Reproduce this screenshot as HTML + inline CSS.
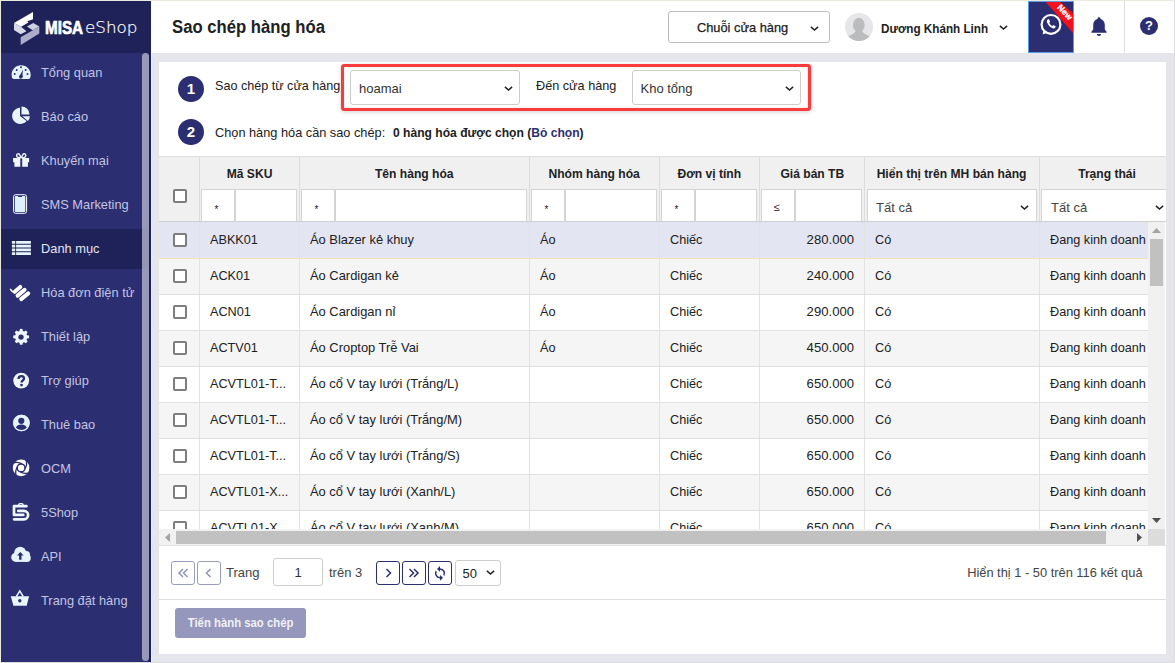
<!DOCTYPE html>
<html lang="vi">
<head>
<meta charset="utf-8">
<title>Sao chép hàng hóa</title>
<style>
*{box-sizing:border-box;margin:0;padding:0}
html,body{width:1175px;height:663px;overflow:hidden}
body{font-family:"Liberation Sans",sans-serif;font-size:13px;color:#212121;background:#e5e6eb;position:relative}
.abs{position:absolute}
.t{display:inline-block;transform-origin:0 50%;transform:scaleX(.975);white-space:nowrap}
.tb{display:inline-block;transform-origin:0 50%;transform:scaleX(.93);white-space:nowrap;font-weight:bold}
.tc{transform-origin:50% 50%}
.tr{transform-origin:100% 50%}
#frame{position:absolute;left:0;top:0;width:1175px;height:663px;border-left:1px solid #e9e9e2;border-top:1px solid #e9e9e2;border-right:1px solid #dcdcdc;border-bottom:1px solid #dcdcdc;pointer-events:none;z-index:50}
/* sidebar */
#side{position:absolute;left:1px;top:1px;width:150px;height:661px;background:#2b2e70}
#logo{position:absolute;left:0;top:0;width:150px;height:52px;background:#1f2259}
#misa{position:absolute;left:43.5px;top:14.5px;font-size:17.5px;font-weight:bold;color:#fff;line-height:24px;transform-origin:0 50%;transform:scaleX(.87);-webkit-text-stroke:.7px #fff}
#eshop{position:absolute;left:83.7px;top:14.5px;font-family:"DejaVu Sans Light","DejaVu Sans",sans-serif;font-weight:200;font-size:16.5px;color:#fff;line-height:24px;transform-origin:0 50%;transform:scaleX(1.015);-webkit-text-stroke:.2px #fff}
.mi{position:absolute;left:0;width:150px;height:40px;color:#c3c5e3;font-size:13.5px;line-height:40px;white-space:nowrap}
.mi span{position:absolute;left:40px;top:0;transform:scaleX(.95)}
.mi svg{position:absolute;left:10px;top:9px;width:20px;height:20px}
.mi.act{background:#1f2259;color:#e4e5f5}
#sthumb{position:absolute;left:141px;top:52px;width:7px;height:608px;background:rgba(200,199,215,.7);border-radius:4px}
#sedge{position:absolute;left:148px;top:52px;width:2px;height:609px;background:#1a1e68}
#wline{position:absolute;left:151px;top:53px;width:1px;height:609px;background:#f4f4f6}
/* header */
#head{position:absolute;left:151px;top:1px;width:1023px;height:52px;background:#fff}
#title{position:absolute;left:21px;top:14px;font-size:18px;color:#212121;line-height:24px;transform:scaleX(.927)}
#chain{position:absolute;left:517px;top:10px;width:162px;height:32px;border:1px solid #bdbdbd;border-radius:3px;background:#fff}
#chain span{position:absolute;left:28px;top:0;line-height:31px;font-size:13px;-webkit-text-stroke:.25px #212121;transform:scaleX(.985)}
#avatar{position:absolute;left:694px;top:12px;width:28px;height:28px;border-radius:50%;background:#e6e6e8;overflow:hidden}
#uname{position:absolute;left:730px;top:1px;line-height:54px;font-size:13px;color:#212121;transform:scaleX(.9)}
#callbox{position:absolute;left:877px;top:0;width:46px;height:52px;background:#2b2e70;border:1px solid #5b9be6;overflow:hidden}
#vsep{position:absolute;left:973px;top:0;width:1px;height:52px;background:#e0e0e0}
#qm{position:absolute;left:989px;top:16px;width:18px;height:18px;border-radius:50%;background:#2b2e70;color:#fff;font-weight:bold;font-size:13px;line-height:18px;text-align:center}
/* panel */
#panel{position:absolute;left:159px;top:62px;width:1007px;height:592px;background:#fff;overflow:hidden}
.circ{position:absolute;left:19px;width:26px;height:26px;border-radius:50%;background:#2b2e70;color:#fff;font-weight:bold;font-size:15px;line-height:26px;text-align:center}
.lbl{position:absolute;white-space:nowrap;font-size:13px;line-height:18px;color:#212121}
#redbox{position:absolute;left:182.3px;top:2px;width:469.7px;height:47px;border:3px solid #fb3c3c;border-radius:3px;box-shadow:0 1px 4px rgba(0,0,0,.18),inset 0 0 3px rgba(0,0,0,.12)}
.sel{position:absolute;height:35px;border:1px solid #ccc;border-radius:3px;background:#fff;font-size:13px;line-height:35px;white-space:nowrap}
.sel span{position:absolute;left:8px;top:-.2px;transform:none;color:#333}
.chev{position:absolute;width:9px;height:6px}
/* grid */
#grid{position:absolute;left:0;top:94px;width:1007px;height:390px;overflow:hidden}
#ghead{position:absolute;left:0;top:0;width:1007px;height:66px;background:#f0f0f0;border-top:1px solid #dedede;border-bottom:1px solid #cfcfcf;overflow:hidden}
.vl{position:absolute;top:0;width:1px;height:100%;background:#dcdcdc}
.th{position:absolute;top:0;height:33px;line-height:33px;text-align:center;font-size:13px;white-space:nowrap;color:#212121}
.fb{position:absolute;top:32px;height:34px;background:#fff;border:1px solid #d4d4d4;border-bottom:none;font-size:11px;color:#222}
.fb i{position:absolute;left:0;top:0;width:100%;font-style:normal;line-height:34px;text-align:left}
.cb{position:absolute;width:14px;height:14px;border:2px solid #7d7d7d;border-radius:2px;background:#fff}
#gbody{position:absolute;left:0;top:66px;width:989px;height:307px;overflow:hidden;background:#e3e5f2}
.row{position:absolute;left:0;width:1200px;height:36px;border-bottom:1px solid #e0e0e0;background:#fff;line-height:34px;font-size:13px;white-space:nowrap;color:#212121}
.row.alt{background:#f5f5f5}
.row.sel1{background:#e3e5f2;border-bottom-color:#f3e2b6}
.row span{position:absolute;top:0}
.row .cb{top:10px;left:14px}
#vsb{position:absolute;left:989px;top:66px;width:17px;height:307px;background:#f1f1f1}
#vthumb{position:absolute;left:2px;top:17px;width:13px;height:47px;background:#c1c1c1}
#hsb{position:absolute;left:0;top:373px;width:989px;height:17px;background:#f1f1f1}
#hthumb{position:absolute;left:17px;top:2px;width:930px;height:13px;background:#c1c1c1}
#corner{position:absolute;left:989px;top:373px;width:17px;height:17px;background:#dcdcdc}
#pager{position:absolute;left:0;top:483px;width:1007px;height:55px;border-top:1px solid #e0e0e0;border-bottom:1px solid #e0e0e0}
.pb{position:absolute;top:14.5px;width:24px;height:24px;border:1px solid #2b2e70;border-radius:3px;background:#fff}
.pb.dis{border-color:#9a9cc0}
.pb svg{position:absolute;left:50%;top:50%;transform:translate(-50%,-50%)}
#pgin{position:absolute;left:114px;top:12px;width:50px;height:28px;border:1px solid #ccc;border-radius:3px;text-align:center;line-height:28px;font-size:13px;color:#333}
#pgsz{position:absolute;left:295.5px;top:14px;width:46px;height:26px;border:1px solid #ccc;border-radius:3px;font-size:13px;line-height:25px}
#pgsz span{position:absolute;left:7px}
#btn{position:absolute;left:16px;top:546px;width:131px;height:30px;background:#9697bd;border-radius:3px;color:rgba(255,255,255,.88);font-size:13px;line-height:30px;text-align:center;white-space:nowrap}
#btn span{transform:scaleX(.872)}
</style>
</head>
<body>
<div id="side">
<div id="logo">
<svg class="abs" style="left:12px;top:9.7px" width="30" height="36" viewBox="0 0 30 36"><path d="M1 12.1L20 .9v7.4l-5.7 1.9 1.1 1.4-7.3 4.1z" fill="#ffffff"/><path d="M1 12.1l7.1 3.6 5.3 4.5-5.7 3.1L1 19z" fill="#d8d9e7"/><path d="M14 15.4l6.3-3.3 6 3.5-6.6 3.6z" fill="#cfd1e1"/><path d="M7.7 26.3l18.6-10.7v6.9L7.7 33.9z" fill="#abadca"/></svg>
<span id="misa">MISA</span><span id="eshop">eShop</span>
</div>
<div class="mi" style="top:52px"><svg viewBox="0 0 20 20" overflow="visible"><path d="M10.15 3.2c-5.3 0-9.55 4.25-9.55 9.5 0 1.2.2 2.3.6 3.3.3.7.8 1.1 1.6 1.1h14.7c.8 0 1.3-.4 1.6-1.1.4-1 .6-2.1.6-3.3 0-5.25-4.25-9.5-9.55-9.5z" fill="#e6f3fc"/><circle cx="10" cy="5.3" r="1" fill="#2b2e70"/><circle cx="5.7" cy="8.1" r="1" fill="#2b2e70"/><circle cx="14.6" cy="8.1" r="1" fill="#2b2e70"/><circle cx="3.7" cy="12.1" r="1" fill="#2b2e70"/><circle cx="16.5" cy="12.1" r="1" fill="#2b2e70"/><path d="M11.9 7.6l-2.9 5.8a1.7 1.7 0 1 0 2.4.9z" fill="#2b2e70"/><circle cx="10" cy="14.3" r="1.7" fill="#2b2e70"/></svg><span class="t">Tổng quan</span></div>
<div class="mi" style="top:96px"><svg viewBox="0 0 20 20" overflow="visible"><path d="M9 1.8A8.1 8.1 0 1 0 15.6 14.9L9 9.9z" fill="#e9f3fc"/><path d="M10.5 8.4V.5a8 8 0 0 1 8 7.9z" fill="#e9f3fc"/><path d="M11.4 10.2h7.5a8 8 0 0 1-2 4.8z" fill="#e9f3fc"/></svg><span class="t">Báo cáo</span></div>
<div class="mi" style="top:140px"><svg viewBox="0 0 20 20" overflow="visible"><path d="M2.1 8h7.2v4.3H2.1zM11.2 8h6.9v4.3h-6.9zM3.4 12.3h5.9v4.5H3.4zM11.2 12.3h5.7v4.5h-5.7z" fill="#f2f6fd"/><path d="M9.7 7.6C8 7.9 5.7 7.4 5.6 5.6 5.5 4 7.4 3.1 8.5 4.5c.7.8 1 2 1.2 3.1zM10.7 7.6c1.7.3 4-.2 4.1-2 .1-1.6-1.8-2.5-2.9-1.1-.7.8-1 2-1.2 3.1z" fill="none" stroke="#f2f6fd" stroke-width="1.4"/></svg><span class="t">Khuyến mại</span></div>
<div class="mi" style="top:184px"><svg viewBox="0 0 20 20" overflow="visible"><rect x="2.6" y=".7" width="13" height="18.6" rx="2" fill="none" stroke="#ffffff" stroke-width="1"/><rect x="3.9" y="2" width="10.4" height="16" rx="1" fill="#dff0fb"/><rect x="7" y="2" width="4.2" height="1" rx=".5" fill="#2b2e70"/></svg><span class="t">SMS Marketing</span></div>
<div class="mi act" style="top:228px"><svg viewBox="0 0 20 20" overflow="visible"><path d="M.9 3h3.3v2.75H.9zM5.1 3h14.8v2.75H5.1zM.9 6.75h3.3V9.5H.9zM5.1 6.75h14.8V9.5H5.1zM.9 10.5h3.3v2.75H.9zM5.1 10.5h14.8v2.75H5.1zM.9 14.25h3.3V17H.9zM5.1 14.25h14.8V17H5.1z" fill="#e8f4fc"/></svg><span class="t">Danh mục</span></div>
<div class="mi" style="top:272px"><svg viewBox="0 0 20 20" overflow="visible"><g fill="none" stroke="#ffffff" stroke-linecap="round"><path d="M3.7 9.7L9.3 4.9" stroke-width="3.9"/><path d="M6.6 13.6l7-5.8" stroke-width="4"/><path d="M10.2 17.1l7-5.7" stroke-width="4"/><path d="M-.5 7.3Q.8 9.6 3.6 10.9" stroke-width="1.5"/></g></svg><span class="t">Hóa đơn điện tử</span></div>
<div class="mi" style="top:316px"><svg viewBox="0 0 20 20" overflow="visible"><path d="M10 0.8l1.7.2.5 2.3 1.5.7 2-1.3 2.1 2.1-1.3 2 .6 1.5 2.4.5v3l-2.4.5-.6 1.5 1.3 2-2.1 2.1-2-1.3-1.5.6-.5 2.4h-3l-.5-2.4-1.5-.6-2 1.3-2.1-2.1 1.3-2-.6-1.5-2.4-.5v-3l2.4-.5.6-1.5-1.3-2 2.1-2.1 2 1.3 1.5-.7.5-2.3z" fill="#f0f5fd" transform="translate(1.5 2.1) scale(.85)"/><circle cx="10" cy="11.1" r="2.7" fill="#2b2e70"/></svg><span class="t">Thiết lập</span></div>
<div class="mi" style="top:360px"><svg viewBox="0 0 20 20" overflow="visible"><circle cx="10.2" cy="10.6" r="7.9" fill="#f0f6fd"/><path d="M7.5 8.9c0-1.7 1.2-2.7 2.8-2.7s2.7.9 2.7 2.3c0 1.9-2.5 2.1-2.5 4" fill="none" stroke="#2b2e70" stroke-width="2.3"/><circle cx="10.5" cy="15.1" r="1.4" fill="#2b2e70"/></svg><span class="t">Trợ giúp</span></div>
<div class="mi" style="top:404px"><svg viewBox="0 0 20 20" overflow="visible"><circle cx="10.4" cy="9" r="8.2" fill="#e6f3fc"/><circle cx="10.3" cy="6.8" r="3.1" fill="#2b2e70"/><path d="M4.5 14.3c.6-2.7 2.9-3.9 5.8-3.9s5.2 1.2 5.8 3.9c-1.4 1.7-3.5 2.5-5.8 2.5s-4.4-.8-5.8-2.5z" fill="#2b2e70"/><circle cx="10.4" cy="9" r="7.7" fill="none" stroke="#e6f3fc" stroke-width="1.3"/></svg><span class="t">Thuê bao</span></div>
<div class="mi" style="top:448px"><svg viewBox="0 0 20 20" overflow="visible"><circle cx="10.1" cy="9.9" r="8.3" fill="#ffffff"/><g transform="translate(10.1 9.9)" fill="none" stroke="#2b2e70" stroke-width="1.3" stroke-linecap="round"><circle r="3.9" stroke-width="1.5"/><path d="M.2 -4.3Q-3.3 -6.1 -6.6 -5.3"/><g transform="rotate(90)"><path d="M.2 -4.3Q-3.3 -6.1 -6.6 -5.3"/></g><g transform="rotate(180)"><path d="M.2 -4.3Q-3.3 -6.1 -6.6 -5.3"/></g><g transform="rotate(270)"><path d="M.2 -4.3Q-3.3 -6.1 -6.6 -5.3"/></g></g></svg><span class="t">OCM</span></div>
<div class="mi" style="top:492px"><svg viewBox="0 0 20 20" overflow="visible"><g fill="none" stroke="#eef8fe" stroke-linecap="round" stroke-linejoin="round"><path d="M7.7 3.2V2.9a1.3 1.3 0 0 1 1.3-1.3h1.8a1.3 1.3 0 0 1 1.3 1.3v.3" stroke-width="1.4"/><path d="M15.4 4.2H3V12.9h9.3" stroke-width="2.7"/><path d="M7.3 8.9h5.6a4.2 4.2 0 0 1 0 8.4H3.1" stroke-width="2.7"/></g></svg><span class="t">5Shop</span></div>
<div class="mi" style="top:536px"><svg viewBox="0 0 20 20" overflow="visible"><g fill="#e6f3fc"><circle cx="4.8" cy="11.3" r="4.6"/><circle cx="9.2" cy="6.8" r="6"/><circle cx="15.2" cy="8.7" r="3.8"/><circle cx="15.9" cy="12" r="3.9"/><rect x="4.8" y="9" width="11.1" height="6.9"/></g><path d="M9.3 5.9l3.3 3.7h-2.1v4.1H8.1V9.6H6z" fill="#2b2e70"/></svg><span class="t">API</span></div>
<div class="mi" style="top:580px"><svg viewBox="0 0 20 20" overflow="visible"><path d="M-.2 6.3h18.3l-2.4 9.5H2.4z" fill="#e9f4fd"/><path d="M5.4 6.5L8.8.9l3.4 5.6" fill="none" stroke="#e9f4fd" stroke-width="1.5"/><circle cx="8.8" cy="10.7" r="1.7" fill="#2b2e70"/></svg><span class="t">Trang đặt hàng</span></div>
<div id="sedge"></div><div id="sthumb"></div></div><div id="wline"></div>
<div id="head">
<div id="title" class="tb">Sao chép hàng hóa</div>
<div id="chain"><span class="t">Chuỗi cửa hàng</span><svg class="chev" style="left:140.9px;top:14.3px" viewBox="0 0 9 6"><path d="M.9 .9L4.5 4l3.6-3.1" fill="none" stroke="#222" stroke-width="1.5"/></svg></div>
<div id="avatar"><svg width="28" height="28" viewBox="0 0 28 28"><ellipse cx="13.85" cy="11.9" rx="5.9" ry="7.1" fill="#bbbcbe"/><path d="M3 23.3C6 21.6 10.2 20.8 10.6 17.5h6.6c.4 3.3 4.6 4.1 7.6 5.8V29H3z" fill="#bbbcbe"/></svg></div>
<div id="uname" class="tb">Dương Khánh Linh</div><svg class="chev" style="left:847.9px;top:24.3px" viewBox="0 0 9 6"><path d="M.9 .9L4.5 4l3.6-3.1" fill="none" stroke="#222" stroke-width="1.5"/></svg>
<div id="callbox"><svg class="abs" style="left:0;top:0" width="44" height="50" viewBox="0 0 44 50"><path d="M16.7 0h14.5L44 11.2V31z" fill="#f5101c"/><circle cx="22" cy="22.4" r="9.4" fill="#2b2e70" stroke="#fff" stroke-width="2.2"/><path d="M14.3 27.8l-.6 4.7 5.2-2z" fill="#fff"/><path d="M18.7 17.6c-.9.6-1.1 1.6-.7 2.7 1.1 2.9 3 4.9 5.7 6 1.1.4 2.1.1 2.7-.9l.4-.8-2.4-1.6-1.1 1c-1.4-.7-2.4-1.8-3.1-3.3l1-1.1-1.5-2.5z" fill="#fff"/><text x="0" y="0" transform="translate(27.8 5.8) rotate(47)" font-family="Liberation Sans, sans-serif" font-size="8.5" font-weight="bold" fill="#fff" stroke="#fff" stroke-width=".3">New</text></svg></div>
<svg class="abs" style="left:939px;top:15px" width="18" height="22" viewBox="0 0 18 22"><path d="M9 1.2c.9 0 1.5.6 1.5 1.4v.5c2.7.7 4.3 3 4.3 5.9v4.5l1.8 2.3v1H1.4v-1l1.8-2.3V9c0-2.9 1.6-5.2 4.3-5.9v-.5c0-.8.6-1.4 1.5-1.4z" fill="#2b2e70"/><path d="M6.9 18h4.2a2.1 2.1 0 0 1-4.2 0z" fill="#2b2e70"/></svg>
<div id="vsep"></div>
<div id="qm">?</div>
</div>
<div id="panel">
<div class="circ" style="top:14px">1</div>
<div class="lbl t" style="left:56px;top:15px;transform:scaleX(.968)">Sao chép từ cửa hàng</div>
<div id="redbox"></div>
<div class="sel" style="left:191px;top:8px;width:170px"><span class="t">hoamai</span><svg class="chev" style="left:152.5px;top:15.3px" viewBox="0 0 9 6"><path d="M.9 .9L4.5 4l3.6-3.1" fill="none" stroke="#222" stroke-width="1.5"/></svg></div>
<div class="lbl t" style="left:377px;top:15px">Đến cửa hàng</div>
<div class="sel" style="left:472.5px;top:8px;width:169px"><span class="t">Kho tổng</span><svg class="chev" style="left:152px;top:15.3px" viewBox="0 0 9 6"><path d="M.9 .9L4.5 4l3.6-3.1" fill="none" stroke="#222" stroke-width="1.5"/></svg></div>
<div class="circ" style="top:57px">2</div>
<div class="lbl t" style="left:56px;top:61.7px;transform:scaleX(.981)">Chọn hàng hóa cần sao chép:</div>
<div class="lbl tb" style="left:234px;top:61.7px"><span id="cnt">0 hàng hóa được chọn (</span><span style="color:#2b2e70">Bỏ chọn</span>)</div>
<div id="grid"><div id="ghead">
<div class="vl" style="left:40px"></div>
<div class="vl" style="left:140px"></div>
<div class="vl" style="left:370px"></div>
<div class="vl" style="left:500px"></div>
<div class="vl" style="left:600px"></div>
<div class="vl" style="left:705px"></div>
<div class="vl" style="left:880px"></div>
<div class="th" style="left:41px;width:99px"><span class="tb tc">Mã SKU</span></div>
<div class="fb" style="left:42px;width:34px"><i style="padding-left:12.5px;font-size:10px;top:3.3px">*</i></div>
<div class="fb" style="left:76px;width:62px"></div>
<div class="th" style="left:141px;width:229px"><span class="tb tc">Tên hàng hóa</span></div>
<div class="fb" style="left:142px;width:34px"><i style="padding-left:12.5px;font-size:10px;top:3.3px">*</i></div>
<div class="fb" style="left:176px;width:192px"></div>
<div class="th" style="left:371px;width:129px"><span class="tb tc">Nhóm hàng hóa</span></div>
<div class="fb" style="left:372px;width:34px"><i style="padding-left:12.5px;font-size:10px;top:3.3px">*</i></div>
<div class="fb" style="left:406px;width:92px"></div>
<div class="th" style="left:501px;width:99px"><span class="tb tc">Đơn vị tính</span></div>
<div class="fb" style="left:502px;width:34px"><i style="padding-left:12.5px;font-size:10px;top:3.3px">*</i></div>
<div class="fb" style="left:536px;width:62px"></div>
<div class="th" style="left:601px;width:104px"><span class="tb tc">Giá bán TB</span></div>
<div class="fb" style="left:602px;width:34px"><i style="padding-left:11.5px;">≤</i></div>
<div class="fb" style="left:636px;width:67px"></div>
<div class="th" style="left:706px;width:174px"><span class="tb tc">Hiển thị trên MH bán hàng</span></div>
<div class="fb fs" style="left:708px;width:170px"><i style="padding-left:8px;font-size:13px;color:#444;top:1px">Tất cả</i><svg class="chev" style="left:151.5px;top:14.5px" viewBox="0 0 9 6"><path d="M.9 .9L4.5 4l3.6-3.1" fill="none" stroke="#222" stroke-width="1.5"/></svg></div>
<div class="th" style="left:881px;width:135px"><span class="tb tc">Trạng thái</span></div>
<div class="fb fs" style="left:882px;width:140px"><i style="padding-left:9px;font-size:13px;color:#444;top:1px">Tất cả</i><svg class="chev" style="left:113px;top:14.5px" viewBox="0 0 9 6"><path d="M.9 .9L4.5 4l3.6-3.1" fill="none" stroke="#222" stroke-width="1.5"/></svg></div>
<div class="cb" style="left:14px;top:32px"></div>
</div>
<div id="gbody">
<div class="row sel1" style="top:1px"><div class="cb"></div><span class="t" style="left:51px">ABKK01</span><span class="t" style="left:151px;transform:scaleX(.992)">Áo Blazer kẻ khuy</span><span class="t" style="left:381px">Áo</span><span class="t" style="left:511px">Chiếc</span><span class="t tr" style="left:601px;width:94px;text-align:right;transform:scaleX(1.008)">280.000</span><span class="t" style="left:716px">Có</span><span class="t" style="left:891px">Đang kinh doanh</span></div>
<div class="row alt" style="top:37px"><div class="cb"></div><span class="t" style="left:51px">ACK01</span><span class="t" style="left:151px;transform:scaleX(.992)">Áo Cardigan kẻ</span><span class="t" style="left:381px">Áo</span><span class="t" style="left:511px">Chiếc</span><span class="t tr" style="left:601px;width:94px;text-align:right;transform:scaleX(1.008)">240.000</span><span class="t" style="left:716px">Có</span><span class="t" style="left:891px">Đang kinh doanh</span></div>
<div class="row" style="top:73px"><div class="cb"></div><span class="t" style="left:51px">ACN01</span><span class="t" style="left:151px;transform:scaleX(.992)">Áo Cardigan nỉ</span><span class="t" style="left:381px">Áo</span><span class="t" style="left:511px">Chiếc</span><span class="t tr" style="left:601px;width:94px;text-align:right;transform:scaleX(1.008)">290.000</span><span class="t" style="left:716px">Có</span><span class="t" style="left:891px">Đang kinh doanh</span></div>
<div class="row alt" style="top:109px"><div class="cb"></div><span class="t" style="left:51px">ACTV01</span><span class="t" style="left:151px;transform:scaleX(.992)">Áo Croptop Trễ Vai</span><span class="t" style="left:381px">Áo</span><span class="t" style="left:511px">Chiếc</span><span class="t tr" style="left:601px;width:94px;text-align:right;transform:scaleX(1.008)">450.000</span><span class="t" style="left:716px">Có</span><span class="t" style="left:891px">Đang kinh doanh</span></div>
<div class="row" style="top:145px"><div class="cb"></div><span class="t" style="left:51px">ACVTL01-T...</span><span class="t" style="left:151px;transform:scaleX(.992)">Áo cổ V tay lưới (Trắng/L)</span><span class="t" style="left:381px"></span><span class="t" style="left:511px">Chiếc</span><span class="t tr" style="left:601px;width:94px;text-align:right;transform:scaleX(1.008)">650.000</span><span class="t" style="left:716px">Có</span><span class="t" style="left:891px">Đang kinh doanh</span></div>
<div class="row alt" style="top:181px"><div class="cb"></div><span class="t" style="left:51px">ACVTL01-T...</span><span class="t" style="left:151px;transform:scaleX(.992)">Áo cổ V tay lưới (Trắng/M)</span><span class="t" style="left:381px"></span><span class="t" style="left:511px">Chiếc</span><span class="t tr" style="left:601px;width:94px;text-align:right;transform:scaleX(1.008)">650.000</span><span class="t" style="left:716px">Có</span><span class="t" style="left:891px">Đang kinh doanh</span></div>
<div class="row" style="top:217px"><div class="cb"></div><span class="t" style="left:51px">ACVTL01-T...</span><span class="t" style="left:151px;transform:scaleX(.992)">Áo cổ V tay lưới (Trắng/S)</span><span class="t" style="left:381px"></span><span class="t" style="left:511px">Chiếc</span><span class="t tr" style="left:601px;width:94px;text-align:right;transform:scaleX(1.008)">650.000</span><span class="t" style="left:716px">Có</span><span class="t" style="left:891px">Đang kinh doanh</span></div>
<div class="row alt" style="top:253px"><div class="cb"></div><span class="t" style="left:51px">ACVTL01-X...</span><span class="t" style="left:151px;transform:scaleX(.992)">Áo cổ V tay lưới (Xanh/L)</span><span class="t" style="left:381px"></span><span class="t" style="left:511px">Chiếc</span><span class="t tr" style="left:601px;width:94px;text-align:right;transform:scaleX(1.008)">650.000</span><span class="t" style="left:716px">Có</span><span class="t" style="left:891px">Đang kinh doanh</span></div>
<div class="row" style="top:289px"><div class="cb"></div><span class="t" style="left:51px">ACVTL01-X...</span><span class="t" style="left:151px;transform:scaleX(.992)">Áo cổ V tay lưới (Xanh/M)</span><span class="t" style="left:381px"></span><span class="t" style="left:511px">Chiếc</span><span class="t tr" style="left:601px;width:94px;text-align:right;transform:scaleX(1.008)">650.000</span><span class="t" style="left:716px">Có</span><span class="t" style="left:891px">Đang kinh doanh</span></div>
<div class="vl" style="left:40px;background:#e2e2e2"></div>
<div class="vl" style="left:140px;background:#e2e2e2"></div>
<div class="vl" style="left:370px;background:#e2e2e2"></div>
<div class="vl" style="left:500px;background:#e2e2e2"></div>
<div class="vl" style="left:600px;background:#e2e2e2"></div>
<div class="vl" style="left:705px;background:#e2e2e2"></div>
<div class="vl" style="left:880px;background:#e2e2e2"></div>
</div>
<div id="vsb"><svg class="abs" style="left:4px;top:6px" width="9" height="5" viewBox="0 0 9 5"><path d="M0 5l4.5-5 4.5 5z" fill="#a3a3a3"/></svg><div id="vthumb"></div><svg class="abs" style="left:4px;top:296px" width="9" height="5" viewBox="0 0 9 5"><path d="M0 0l4.5 5 4.5-5z" fill="#505050"/></svg></div>
<div id="hsb"><svg class="abs" style="left:6px;top:4px" width="5" height="9" viewBox="0 0 5 9"><path d="M5 0L0 4.5 5 9z" fill="#a3a3a3"/></svg><div id="hthumb"></div><svg class="abs" style="left:978px;top:4px" width="5" height="9" viewBox="0 0 5 9"><path d="M0 0l5 4.5L0 9z" fill="#505050"/></svg></div><div id="corner"></div>
</div>
<div id="pager">
<div class="pb dis" style="left:12px"><svg width="12" height="10" viewBox="0 0 12 10"><path d="M6 1L2 5l4 4M10.5 1l-4 4 4 4" fill="none" stroke="#8f91b8" stroke-width="1.5"/></svg></div>
<div class="pb dis" style="left:38px"><svg width="12" height="10" viewBox="0 0 12 10"><path d="M7.5 1l-4 4 4 4" fill="none" stroke="#8f91b8" stroke-width="1.5"/></svg></div>
<div class="lbl" style="left:67px;top:18px;color:#444">Trang</div>
<div id="pgin">1</div>
<div class="lbl" style="left:170px;top:18px;color:#444">trên 3</div>
<div class="pb" style="left:217px"><svg width="12" height="10" viewBox="0 0 12 10"><path d="M4.5 1l4 4-4 4" fill="none" stroke="#2b2e70" stroke-width="1.5"/></svg></div>
<div class="pb" style="left:243px"><svg width="12" height="10" viewBox="0 0 12 10"><path d="M1.5 1l4 4-4 4M6 1l4 4-4 4" fill="none" stroke="#2b2e70" stroke-width="1.5"/></svg></div>
<div class="pb" style="left:269px"><svg width="14" height="16" viewBox="0 0 14 16"><path d="M7 3.2V1L4 3.9 7 6.8V4.7a3.6 3.6 0 0 1 3.2 5.3l1.1 1.1A5.1 5.1 0 0 0 7 3.2zM7 12a3.6 3.6 0 0 1-3.2-5.3L2.7 5.6A5.1 5.1 0 0 0 7 13.5v2.2l3-2.9-3-2.9z" fill="#2b2e70"/></svg></div>
<div id="pgsz"><span>50</span><svg class="chev" style="left:30.5px;top:8.8px" viewBox="0 0 9 6"><path d="M.9 .9L4.5 4l3.6-3.1" fill="none" stroke="#222" stroke-width="1.5"/></svg></div>
<div class="lbl t tr" style="right:23px;top:18px;color:#444;transform:scaleX(.988)">Hiển thị 1 - 50 trên 116 kết quả</div>
</div>
<div id="btn"><span class="tb tc">Tiến hành sao chép</span></div>
</div>
<div id="frame"></div>
</body>
</html>
